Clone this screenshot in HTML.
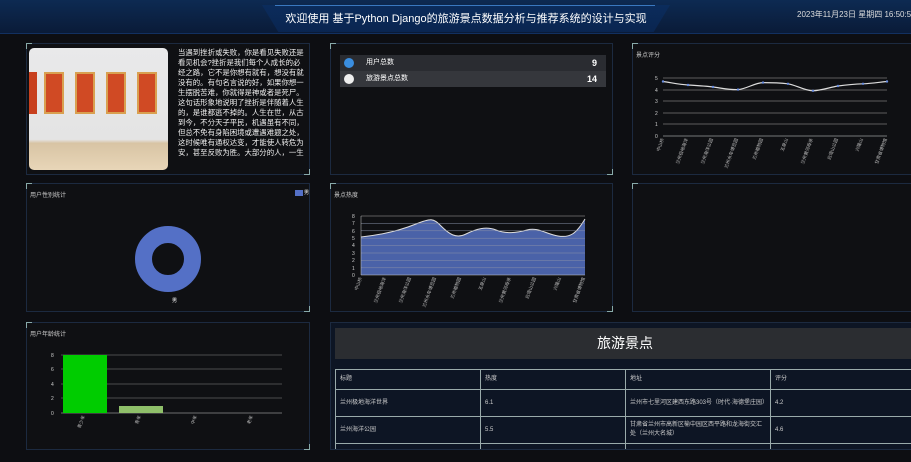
<!DOCTYPE html><html><head><meta charset="utf-8"><style>
*{margin:0;padding:0;box-sizing:border-box}
html,body{width:911px;height:462px;overflow:hidden}
body{background:#0d0e12;font-family:"Liberation Sans","Noto Sans CJK SC",sans-serif;color:#fff;position:relative}
.hdr{position:absolute;left:0;top:0;width:911px;height:34px;background:linear-gradient(#0d2a52,#0a1b38);border-bottom:1px solid #123060}
.ttl{position:absolute;left:262px;top:5px;width:408px;height:27px;background:linear-gradient(#0b2c5c,#0a2550);clip-path:polygon(0 0,100% 0,96% 100%,4% 100%);text-align:center;font-size:11px;line-height:27px;padding-top:1px;white-space:nowrap}
.tline{position:absolute;left:275px;top:5px;width:380px;height:1px;background:#3a78c0}
.date{position:absolute;left:797px;top:9px;font-size:8px;color:#ddd;white-space:nowrap}
.p{position:absolute;border:1px solid #1c2a40;background:#0f1013}
.p:before,.p:after{content:"";position:absolute;width:5px;height:5px;border:1px solid #8aa;}
.p:before{left:-1px;top:-1px;border-right:0;border-bottom:0}
.p:after{right:-1px;bottom:-1px;border-left:0;border-top:0}
.lbl{position:absolute;left:3px;top:6px;font-size:6px;color:#ccc}
.txt{position:absolute;left:151px;top:4px;width:128px;font-size:7.4px;line-height:10px;color:#eee;overflow:hidden;height:124px}
.row{position:absolute;left:9px;width:266px;height:16px;background:#2a2c31;font-size:7px;line-height:16px}
table{border-collapse:collapse;font-size:6px;color:#ccc;table-layout:fixed}
td{border:1px solid #9aa;padding:0 4px;line-height:9px}
svg text{font-family:"Liberation Sans","Noto Sans CJK SC",sans-serif}
</style></head><body>
<div class="hdr"></div>
<div class="ttl">欢迎使用 基于Python Django的旅游景点数据分析与推荐系统的设计与实现</div>
<div class="tline"></div>
<div class="date">2023年11月23日 星期四 16:50:5</div>

<div class="p" style="left:26px;top:43px;width:284px;height:132px">
 <div style="position:absolute;left:2px;top:4px;width:139px;height:122px;border-radius:5px;background:linear-gradient(#e9e9ea 0%,#e4e4e4 75%,#d8c4a4 78%,#e8d6b8 100%);overflow:hidden">
  <div style="position:absolute;left:0;top:24px;width:8px;height:42px;background:#c8401e"></div>
  <div style="position:absolute;left:15px;top:24px;width:20px;height:42px;background:#d04a24;border:2px solid #d9a050"></div>
  <div style="position:absolute;left:46px;top:24px;width:20px;height:42px;background:#d04a24;border:2px solid #d9a050"></div>
  <div style="position:absolute;left:77px;top:24px;width:20px;height:42px;background:#d04a24;border:2px solid #d9a050"></div>
  <div style="position:absolute;left:108px;top:24px;width:20px;height:42px;background:#d04a24;border:2px solid #d9a050"></div>
 </div>
 <div class="txt">当遇到挫折或失败，你是看见失败还是看见机会?挫折是我们每个人成长的必经之路，它不是你想有就有，想没有就没有的。有句名言说的好，如果你想一生摆脱苦难，你就得是神或者是死尸。这句话形象地说明了挫折是伴随着人生的，是谁都逃不掉的。人生在世，从古到今，不分天子平民，机遇虽有不同，但总不免有身陷困境或遭遇难题之处，这时候唯有通权达变，才能使人转危为安，甚至反败为胜。大部分的人，一生</div>
</div>

<div class="p" style="left:330px;top:43px;width:283px;height:132px">
 <div class="row" style="top:11px"><span style="position:absolute;left:4px;top:3px;width:10px;height:10px;border-radius:50%;background:#3a8ee0"></span><span style="position:absolute;left:26px">用户总数</span><b style="position:absolute;right:9px;font-size:9px">9</b></div>
 <div class="row" style="top:27px;background:#35373c"><span style="position:absolute;left:4px;top:3px;width:10px;height:10px;border-radius:50%;background:#eee"></span><span style="position:absolute;left:26px">旅游景点总数</span><b style="position:absolute;right:9px;font-size:9px">14</b></div>
</div>

<div class="p" style="left:632px;top:43px;width:290px;height:132px">
 <div class="lbl">景点评分</div>
 <svg style="position:absolute;left:0;top:0" width="290" height="132" font-size="5" fill="#ccc">
  <g stroke="#aaa" stroke-width=".6"><line x1="30" y1="34" x2="254" y2="34"/><line x1="30" y1="46" x2="254" y2="46"/><line x1="30" y1="57" x2="254" y2="57"/><line x1="30" y1="69" x2="254" y2="69"/><line x1="30" y1="80" x2="254" y2="80"/><line x1="30" y1="92" x2="254" y2="92" stroke="#ddd"/></g>
  <text x="22" y="36">5</text><text x="22" y="48">4</text><text x="22" y="59">3</text><text x="22" y="71">2</text><text x="22" y="82">1</text><text x="22" y="94">0</text>
  <path d="M30 37.5 C40 39,47 40.5,55 41 S72 42,80 43 S97 46,105 45.6 S122 38.6,130 38.6 S148 39,155 39.8 S172 47,180 46.8 S198 43,205 42 S222 40,230 39.8 S248 38,254 37.5" fill="none" stroke="#ddd" stroke-width="1.2"/>
  <g fill="#6b8ee0"><circle cx="30" cy="37.5" r="1.2"/><circle cx="55" cy="41" r="1.2"/><circle cx="80" cy="43" r="1.2"/><circle cx="105" cy="45.6" r="1.2"/><circle cx="130" cy="38.6" r="1.2"/><circle cx="155" cy="39.8" r="1.2"/><circle cx="180" cy="46.8" r="1.2"/><circle cx="205" cy="42" r="1.2"/><circle cx="230" cy="39.8" r="1.2"/><circle cx="254" cy="37.5" r="1.2"/></g>
  <g font-size="4.5" fill="#bbb"><text transform="translate(31,95) rotate(-70)" text-anchor="end">中山桥</text><text transform="translate(55,95) rotate(-70)" text-anchor="end">兰州极地海洋</text><text transform="translate(80,95) rotate(-70)" text-anchor="end">兰州海洋公园</text><text transform="translate(105,95) rotate(-70)" text-anchor="end">兰州水车博览园</text><text transform="translate(130,95) rotate(-70)" text-anchor="end">兰州植物园</text><text transform="translate(155,95) rotate(-70)" text-anchor="end">五泉山</text><text transform="translate(180,95) rotate(-70)" text-anchor="end">兰州黄河母亲</text><text transform="translate(205,95) rotate(-70)" text-anchor="end">白塔山公园</text><text transform="translate(230,95) rotate(-70)" text-anchor="end">兴隆山</text><text transform="translate(254,95) rotate(-70)" text-anchor="end">甘肃省博物馆</text></g>
 </svg>
</div>

<div class="p" style="left:26px;top:183px;width:284px;height:129px">
 <div class="lbl">用户性别统计</div>
 <div style="position:absolute;right:6px;top:6px;width:8px;height:6px;background:#5470c6"></div><div style="position:absolute;right:0;top:5px;font-size:5px">男</div>
 <div style="position:absolute;left:108px;top:42px;width:66px;height:66px;border-radius:50%;border:17px solid #5470c6"></div>
 <div style="position:absolute;left:145px;top:113px;font-size:5px">男</div>
</div>

<div class="p" style="left:330px;top:183px;width:283px;height:129px">
 <div class="lbl">景点热度</div>
 <svg style="position:absolute;left:0;top:0" width="283" height="129" font-size="5" fill="#ccc">
  <path d="M30 53 C50 51,70 46,85 40 S102 34,110 42 S125 55,135 50 S155 42,165 46 S185 49,196 46 S215 50,227 52 S245 50,254 35 L254 91 L30 91Z" fill="#4a62a8"/>
  <path d="M30 53 C50 51,70 46,85 40 S102 34,110 42 S125 55,135 50 S155 42,165 46 S185 49,196 46 S215 50,227 52 S245 50,254 35" fill="none" stroke="#ddd" stroke-width="1"/>
  <g stroke="#8890a8" stroke-width=".5"><line x1="30" y1="32" x2="254" y2="32" stroke="#aaa"/><line x1="30" y1="39.4" x2="254" y2="39.4"/><line x1="30" y1="46.8" x2="254" y2="46.8"/><line x1="30" y1="54.2" x2="254" y2="54.2"/><line x1="30" y1="61.6" x2="254" y2="61.6"/><line x1="30" y1="69" x2="254" y2="69"/><line x1="30" y1="76.4" x2="254" y2="76.4"/><line x1="30" y1="83.8" x2="254" y2="83.8"/><line x1="30" y1="91" x2="254" y2="91" stroke="#ccc"/><line x1="30" y1="32" x2="30" y2="91" stroke="#ccc"/></g>
  <text x="21" y="34">8</text><text x="21" y="41">7</text><text x="21" y="49">6</text><text x="21" y="56">5</text><text x="21" y="63">4</text><text x="21" y="71">3</text><text x="21" y="78">2</text><text x="21" y="86">1</text><text x="21" y="93">0</text>
  <g font-size="4.5" fill="#bbb"><text transform="translate(31,94) rotate(-70)" text-anchor="end">中山桥</text><text transform="translate(55,94) rotate(-70)" text-anchor="end">兰州极地海洋</text><text transform="translate(80,94) rotate(-70)" text-anchor="end">兰州海洋公园</text><text transform="translate(105,94) rotate(-70)" text-anchor="end">兰州水车博览园</text><text transform="translate(130,94) rotate(-70)" text-anchor="end">兰州植物园</text><text transform="translate(155,94) rotate(-70)" text-anchor="end">五泉山</text><text transform="translate(180,94) rotate(-70)" text-anchor="end">兰州黄河母亲</text><text transform="translate(205,94) rotate(-70)" text-anchor="end">白塔山公园</text><text transform="translate(230,94) rotate(-70)" text-anchor="end">兴隆山</text><text transform="translate(254,94) rotate(-70)" text-anchor="end">甘肃省博物馆</text></g>
 </svg>
</div>

<div class="p" style="left:632px;top:183px;width:290px;height:129px"></div>

<div class="p" style="left:26px;top:322px;width:284px;height:128px">
 <div class="lbl">用户年龄统计</div>
 <svg style="position:absolute;left:0;top:0" width="284" height="128" font-size="5" fill="#ccc">
  <g stroke="#888" stroke-width=".6"><line x1="34" y1="32" x2="255" y2="32"/><line x1="34" y1="46" x2="255" y2="46"/><line x1="34" y1="61" x2="255" y2="61"/><line x1="34" y1="75" x2="255" y2="75"/><line x1="34" y1="90" x2="255" y2="90" stroke="#ccc"/></g>
  <text x="24" y="34">8</text><text x="24" y="48">6</text><text x="24" y="63">4</text><text x="24" y="77">2</text><text x="24" y="92">0</text>
  <rect x="36" y="32" width="44" height="58" fill="#00cc00"/><rect x="92" y="83" width="44" height="7" fill="#8fbf6a"/>
  <g font-size="4.5" fill="#bbb"><text transform="translate(58,93) rotate(-70)" text-anchor="end">青少年</text><text transform="translate(114,93) rotate(-70)" text-anchor="end">青年</text><text transform="translate(170,93) rotate(-70)" text-anchor="end">中年</text><text transform="translate(226,93) rotate(-70)" text-anchor="end">老年</text></g>
 </svg>
</div>

<div class="p" style="left:330px;top:322px;width:590px;height:128px;background:#0d1524;overflow:hidden">
 <div style="position:absolute;left:4px;top:5px;width:590px;height:31px;background:#2b2d31;text-align:center;font-size:14px;line-height:31px;padding-right:10px">旅游景点</div>
 <table style="position:absolute;left:4px;top:46px;width:600px">
  <tr style="height:20px"><td style="width:145px">标题</td><td style="width:145px">热度</td><td style="width:145px">地址</td><td>评分</td></tr>
  <tr style="height:27px"><td>兰州极地海洋世界</td><td>6.1</td><td>兰州市七里河区建西东路303号（时代·海德堡庄园）</td><td>4.2</td></tr>
  <tr style="height:27px"><td>兰州海洋公园</td><td>5.5</td><td>甘肃省兰州市高新区榆中园区西平路和龙海街交汇处（兰州大名城）</td><td>4.6</td></tr>
  <tr style="height:27px"><td></td><td></td><td>兰州市七里河区滨河路中段小西湖公园北</td><td></td></tr>
 </table>
</div>
</body></html>
